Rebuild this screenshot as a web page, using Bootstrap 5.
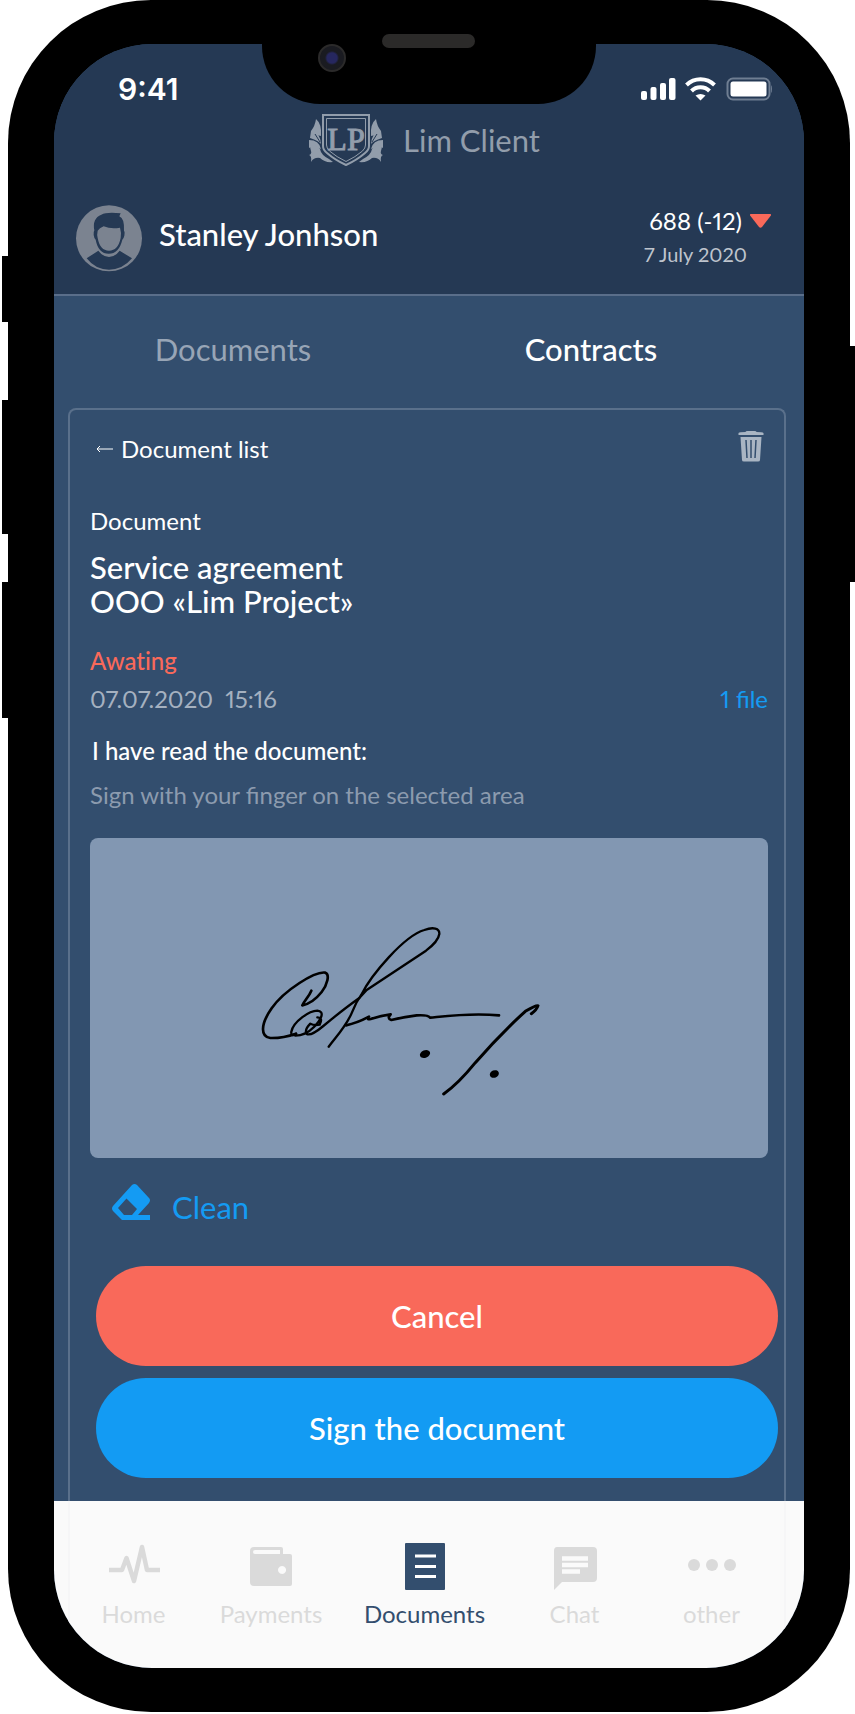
<!DOCTYPE html>
<html lang="en">
<head>
<meta charset="utf-8">
<meta name="viewport" content="width=device-width, initial-scale=1">
<title>Lim Client – Contracts</title>
<link href="https://cdn.jsdelivr.net/npm/bootstrap@5.3.0/dist/css/bootstrap.min.css" rel="stylesheet">
<style>
  body { background: #fff; font-family: Lato, "Liberation Sans", sans-serif; font-size: 24px; line-height: 36px; color: #fff; font-variant-numeric: proportional-nums; }
  svg { display: block; flex: none; }
  a, a:hover { color: inherit; text-decoration: none; }
  button { font-family: inherit; }

  .phone { margin: 0 5px 2px 8px; padding: 44px 46px; background: #000; border-radius: 143px; }
  .side-key { position: absolute; width: 6px; background: #000; left: -6px; }
  .key-mute { top: 256px; height: 66px; }
  .key-up { top: 400px; height: 134px; }
  .key-down { top: 582px; height: 136px; }
  .key-power { top: 346px; height: 236px; left: auto; right: -5px; }
  .screen { background: #334e6e; border-radius: 98px; }

  .notch { position: absolute; top: 0; left: 50%; width: 334px; height: 60px; margin-left: -167px; background: #000; border-radius: 0 0 58px 58px; }
  .notch-wrap { position: absolute; top: 34px; left: 50%; width: 334px; margin-left: -167px; }
  .speaker { position: absolute; top: 0; left: 120px; width: 93px; height: 14px; background: #2b2a29; border-radius: 7px; }
  .camera { position: absolute; top: 10px; left: 56px; width: 28px; height: 28px; border: 2px solid #2b2a2a; border-radius: 50%; background: radial-gradient(circle, #26275f 0 5px, #1a1b21 7px); }

  .app-head { background: #253954; border-bottom: 2px solid #5a6e8a; padding-bottom: 22px; }
  .status { height: 60px; padding: 30px 32px 0 64px; }
  .clock { font: 600 30px/30px Inter, sans-serif; }
  .brand { padding-top: 10px; padding-right: 9px; gap: 20px; color: #929dab; }
  .big { font-size: 31px; }
  .profile { padding: 39px 33px 0 22px; gap: 17px; }
  .profile-name { font-weight: 500; padding-bottom: 10px; }
  .score { line-height: 32px; }
  .score-row { gap: 8px; }
  .score-date { font-size: 20px; line-height: 34px; color: #bec4cd; }

  .tabs { padding: 35px 34px 41px 0; }
  .tab { flex: 1; background: none; border: 0; padding: 0; color: #98a5b6; }
  .tab.active { color: #fff; font-weight: 500; }

  .sheet { margin: 0 18px 0 14px; border: 2px solid #5a708b; border-bottom: 0; border-radius: 8px 8px 0 0; }
  .sheet-body { padding: 20px 16px 0 20px; }
  .semi { font-weight: 500; }
  .back { gap: 8px; padding: 1px 0 0 6px; }
  .trash { background: none; border: 0; padding: 0 4px 0 0; color: #a9b5c3; }
  .label-doc { margin-top: 36px; }
  .doc-title { font-size: 31px; line-height: 34px; font-weight: 500; margin: 11px 0 24px; }
  .tall { line-height: 38px; }
  .coral { color: #f9695a; font-variant-ligatures: none; }
  .pale { color: #a5b1c0; }
  .faded { color: #8c9bae; margin: 8px 0 25px; }
  .azure { color: #149bf3; }
  .read { margin-top: 15px; padding-left: 2px; }
  .sign-pad { background: #8297b2; border-radius: 8px; height: 320px; }
  .clean { background: none; border: 0; height: 41px; margin-top: 26px; padding: 0 0 0 22px; gap: 22px; }
  .actions { padding: 41px 6px 23px 26px; gap: 12px; }
  .pill { --bs-btn-padding-y: 32px; --bs-btn-border-width: 0; --bs-btn-color: #fff; --bs-btn-hover-color: #fff; --bs-btn-font-size: 31px; --bs-btn-line-height: 36px; --bs-btn-font-weight: 500; --bs-btn-border-radius: 50px; line-height: 36px; }
  .pill-cancel { --bs-btn-bg: #f9695a; --bs-btn-hover-bg: #ec5c4d; }
  .pill-sign { --bs-btn-bg: #139bf3; --bs-btn-hover-bg: #0c8cdf; }

  .dock { background: #fafafa; display: grid; grid-template-columns: 159fr 116fr 191fr 109fr 165fr; padding: 42px 10px 39px 0; color: #dadada; }
  .dock::before { content: ""; position: absolute; inset: 0 18px 0 14px; border: solid #f6f6f7; border-width: 0 2px; }
  .dock a { position: relative; gap: 8px; line-height: 30px; }
  .dock a.active { color: #334e6e; }
</style>
</head>
<body>
<div class="phone position-relative">
  <span class="side-key key-mute"></span><span class="side-key key-up"></span>
  <span class="side-key key-down"></span><span class="side-key key-power"></span>

  <div class="screen position-relative overflow-hidden">
    <div class="notch"></div>

    <header class="app-head">
      <div class="status d-flex justify-content-between align-items-center">
        <span class="clock">9:41</span>
        <svg width="134" height="24" viewBox="0 0 134 24" fill="#fff" role="img" aria-label="Signal, Wi-Fi and battery">
          <rect x="3" y="14" width="6" height="9" rx="2"/><rect x="12.500" y="10" width="6" height="13" rx="2"/>
          <rect x="22" y="6" width="6" height="17" rx="2"/><rect x="31" y="1" width="6.500" height="22" rx="2"/>
          <g fill="none" stroke="#fff" stroke-width="4"><path d="M48.500 8a20 20 0 0 1 28 0M53.500 14a12.500 12.500 0 0 1 18 0"/></g>
          <path d="M57.500 18.500q5-3 10 0l-5 5z"/>
          <rect x="89.500" y="1.500" width="42" height="21" rx="5.500" fill="none" stroke="#6f7e92" stroke-width="2"/>
          <rect x="92.500" y="4.500" width="36" height="15" rx="2.500"/><path d="M133 8q1 1 1 4t-1 4z" fill="#6f7e92"/>
        </svg>
      </div>

      <div class="brand d-flex justify-content-center align-items-center">
        <svg width="74" height="52" viewBox="0 0 74 52" fill="currentColor" aria-hidden="true">
          <path d="M14 1h46v31q0 4-4 7-8 7-19 12-11-5-19-12-4-3-4-7z" fill="none" stroke="currentColor" stroke-width="2"/>
          <path d="M17.500 4.500h39V31q0 3-3 6-7 6-16.500 10.500Q27.500 43 20.500 37q-3-3-3-6z" fill="none" stroke="currentColor" stroke-width="1"/>
          <g id="leaf"><path d="M7 5q6 5 5 17-7-1-10-5 4-5 5-12zM2 17q10 3 10 13-2-3-11-6zM0 26q10 0 12 9-8-4-12-1z"/>
          <path d="M1 31q8 0 10 4 1 6 9 10l4 3q-8 1-13-4-6-1-9 4 1-6-2-7 3-1 2-4-1-3-1-6z"/></g>
          <use href="#leaf" transform="matrix(-1 0 0 1 74 0)"/>
          <path d="M6 20l5 8M68 20l-5 8" stroke="#253954"/>
          <text x="37" y="36" text-anchor="middle" font-family="Liberation Serif, serif" font-size="32" stroke="currentColor" stroke-width="1">LP</text>
        </svg>
        <span class="big">Lim Client</span>
      </div>

      <div class="profile d-flex align-items-center">
        <svg width="66" height="67" viewBox="0 0 198 201" aria-hidden="true">
          <circle cx="99" cy="100" r="99" fill="#7b8390"/>
          <path d="M55 76Q48 40 76 29q16-9 58-4l-4 9q16 6 14 44 3 1 1 14-2 9-6 12-10 42-41 42T59 104q-5-5-6-14t2-14z" fill="#253954"/>
          <path d="M65 77q5-8 18-13 22 9 49 4 5 16 2 31-8 38-35 38T65 99q-3-8 0-22z" fill="#7b8390"/>
          <path d="M67 137q14 19 32 19t32-19l37 23q-28 34-69 34t-67-34z" fill="#253954"/>
        </svg>
        <span class="profile-name big">Stanley Jonhson</span>
        <div class="score ms-auto align-self-start">
          <div class="score-row d-flex align-items-center justify-content-end"><span>688 (-12)</span>
            <svg width="21" height="14" viewBox="0 0 21 14" aria-hidden="true"><path d="M1 0h19q2 0 .5 2L12 13q-1.500 1.500-3 0L.5 2Q-1 0 1 0z" fill="#f9695a"/></svg>
          </div>
          <div class="score-date pe-4">7 July 2020</div>
        </div>
      </div>
    </header>

    <nav class="tabs d-flex" aria-label="Sections">
      <button class="tab big" type="button">Documents</button>
      <button class="tab big active" type="button">Contracts</button>
    </nav>

    <main class="sheet">
      <div class="sheet-body">
        <div class="d-flex justify-content-between align-items-start">
          <a class="back d-flex align-items-center" href="#">
            <svg width="17" height="8" viewBox="0 0 17 8" fill="none" stroke="#fff" aria-hidden="true"><path d="M1 4h16M4 1L1 4l3 3"/></svg>
            <span>Document list</span>
          </a>
          <button class="trash" type="button" aria-label="Delete">
            <svg width="26" height="32" viewBox="0 0 26 32" fill="currentColor"><path d="M.5 5V3q1-1 7-1 0-1 2-1h7q2 0 2 1 6 0 7 1v2zM2.500 7h21l-1.500 23q0 1.500-2 1.500H6Q4 31.500 4 30z"/><path d="M8 10l1 18M13 10v18M18 10l-1 18" stroke="#334e6e" stroke-width="1.500"/></svg>
          </button>
        </div>
        <div class="label-doc">Document</div>
        <h1 class="doc-title">Service agreement<br>OOO «Lim Project»</h1>
        <div class="tall semi coral">Awating</div>
        <div class="tall d-flex justify-content-between"><span class="pale">07.07.2020&nbsp; 15:16</span><a class="azure" href="#">1 file</a></div>
        <div class="read semi">I have read the document:</div>
        <p class="faded">Sign with your finger on the selected area</p>
        <div class="sign-pad">
          <svg width="100%" height="320" viewBox="0 0 678 320" role="img" aria-label="Signature">
            <g transform="translate(150 62) scale(.33333)" fill="none" stroke="#000" stroke-width="9" stroke-linecap="round" stroke-linejoin="round">
              <path d="M214 272C207 289 195 300 187 316Q218 310 245 276C262 254 270 223 256 218C226 213 133 270 95 325C60 375 62 410 91 414Q128 415 168 401" stroke-width="8"/>
              <path d="M168 401Q152 412 154 395C160 365 208 332 232 332C255 334 245 357 222 381Q196 407 166 407M232 352Q250 353 239 374Q222 377 211 371Q192 390 200 402Q213 409 250 378Q310 328 358 294" stroke-width="7"/>
              <path d="M266 440C300 396 320 376 336 337Q348 306 364 284C394 224 492 108 553 90C580 80 599 85 598 102Q595 124 558 152L380 270L358 294" stroke-width="7"/>
              <path d="M318 376Q352 369 387 350Q379 360 392 357Q425 346 452 343Q440 356 454 360Q490 351 530 346Q565 344 570 353C620 348 690 338 777 346" stroke-width="8"/>
              <path d="M611 582Q655 551 706 488Q780 403 856 334Q889 314 894 317Q890 330 874 341"/>
              <g fill="#000" stroke="none"><ellipse cx="555" cy="462" rx="16" ry="11" transform="rotate(-22 555 462)"/><ellipse cx="763" cy="522" rx="14" ry="11" transform="rotate(-22 763 522)"/></g>
            </g>
          </svg>
        </div>
        <button class="clean azure big d-flex align-items-end" type="button">
          <svg class="align-self-start" width="38" height="36" viewBox="0 0 38 36" fill="currentColor" aria-hidden="true"><path fill-rule="evenodd" d="M20 1q2.500-2 5 0l12 13q2 2 0 5L26 31h12v5H10L1 27q-2-2.500 0-5zM14.500 14.500L6 24l6 7h8l5-6z"/></svg>
          <span>Clean</span>
        </button>
      </div>
      <div class="actions d-grid">
        <button class="btn pill pill-cancel" type="button">Cancel</button>
        <button class="btn pill pill-sign" type="button">Sign the document</button>
      </div>
    </main>

    <nav class="dock position-relative" aria-label="Main">
      <a class="d-flex flex-column align-items-center" href="#">
        <svg width="52" height="48" viewBox="0 0 52 48" fill="none" stroke="currentColor" stroke-width="4.500" stroke-linejoin="round" aria-hidden="true"><path d="M1 27h13l4.500-12L26 38l8-34 5 23h13"/></svg>
        <span>Home</span></a>
      <a class="d-flex flex-column align-items-center" href="#">
        <svg width="44" height="48" viewBox="0 0 44 48" fill="currentColor" aria-hidden="true"><path fill-rule="evenodd" d="M5 4h27q2 0 2 2v5h7q2 0 2 2v28q0 2-2 2H5q-4 0-4-4V8q0-4 4-4zm1 3q-2 0-2 2t2 2h25V7zm27 16a4 4 0 1 0 .1 0z"/></svg>
        <span>Payments</span></a>
      <a class="active d-flex flex-column align-items-center" href="#" aria-current="page">
        <svg width="40" height="48" viewBox="0 0 40 48" fill="currentColor" aria-hidden="true"><rect width="40" height="47" rx="1"/><path d="M10 13h21M10 23.500h21M10 33.500h21" stroke="#fff" stroke-width="3"/></svg>
        <span>Documents</span></a>
      <a class="d-flex flex-column align-items-center" href="#">
        <svg width="44" height="48" viewBox="0 0 44 48" fill="currentColor" aria-hidden="true"><path d="M4 4h36q4 0 4 4v27q0 4-4 4H9l-8 8V8q0-4 3-4z"/><path d="M9 15.500h26M9 22h26M9 28.500h18" stroke="#fafafa" stroke-width="4.500"/></svg>
        <span>Chat</span></a>
      <a class="d-flex flex-column align-items-center" href="#">
        <svg width="50" height="48" viewBox="0 0 50 48" fill="currentColor" aria-hidden="true"><circle cx="7" cy="22" r="6"/><circle cx="25" cy="22" r="6"/><circle cx="43" cy="22" r="6"/></svg>
        <span>other</span></a>
    </nav>
  </div>

  <div class="notch-wrap"><span class="speaker"></span><span class="camera"></span></div>
</div>
<script src="https://cdn.jsdelivr.net/npm/bootstrap@5.3.0/dist/js/bootstrap.bundle.min.js"></script>
</body>
</html>
